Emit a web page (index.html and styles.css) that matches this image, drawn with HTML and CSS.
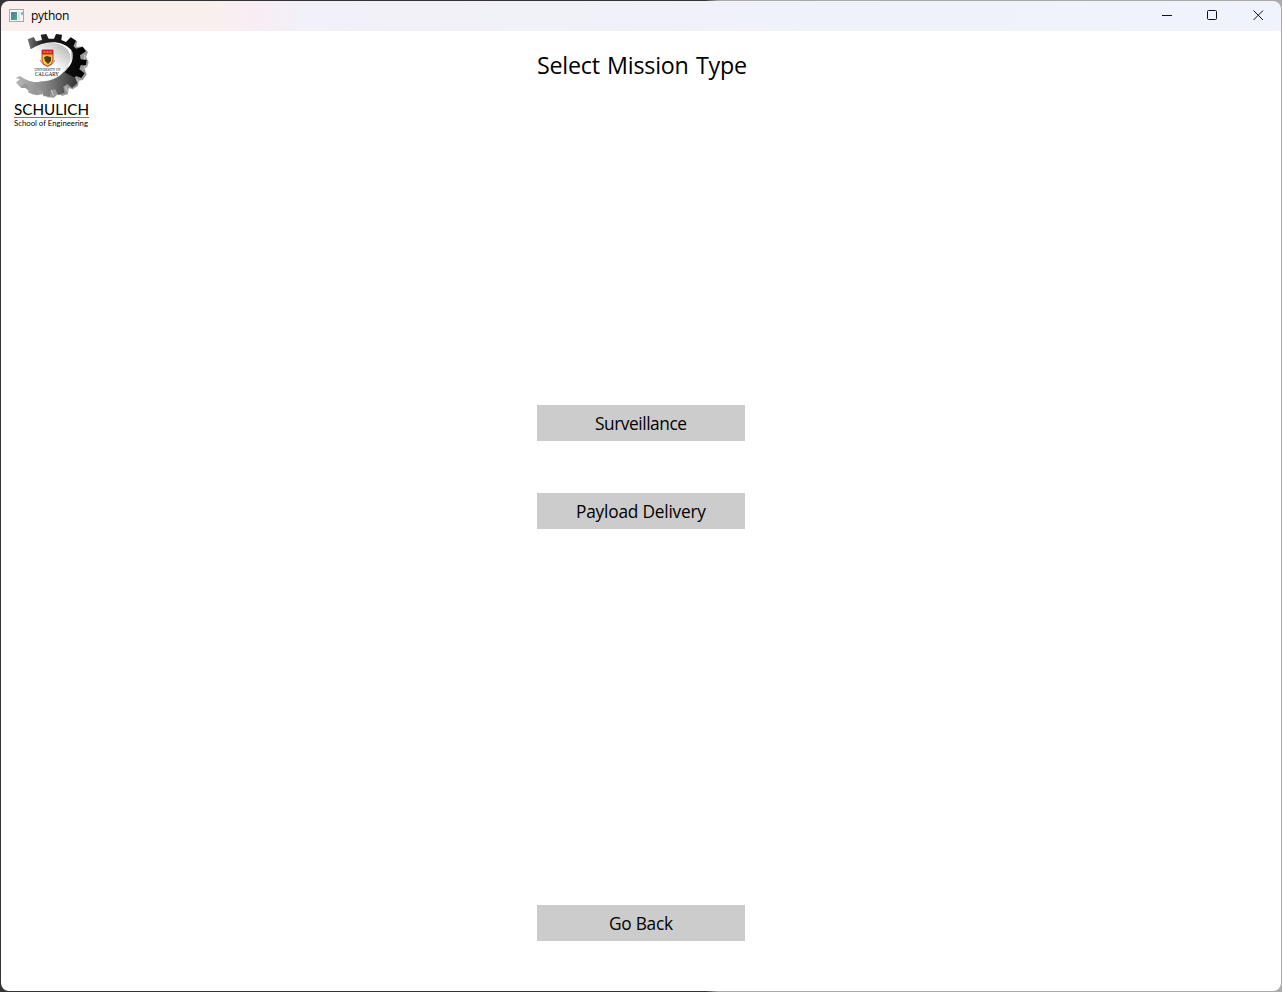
FILE: index.html
```html
<!DOCTYPE html>
<html lang="en">
<head>
<meta charset="utf-8">
<title>python</title>
<link rel="stylesheet" href="styles.css">
</head>
<body>
<div class="window">
  <header class="titlebar">
    <svg class="app-icon" width="16" height="13" viewBox="0 0 16 13">
      <defs><linearGradient id="pane" x2="1" y2="1"><stop stop-color="#4d7fae"/><stop offset="1" stop-color="#55a578"/></linearGradient></defs>
      <rect x=".5" y=".5" width="14" height="12" fill="#f5f5f5" stroke="#a3a9ae"/>
      <rect x="2" y="3" width="6" height="8" fill="url(#pane)"/>
      <rect x="9" y="3" width="2" height="8" fill="#dde2e5"/>
      <rect x="12" y="3" width="2" height="3" fill="#8fb9bf"/>
    </svg>
    <span class="caption">python</span>
    <svg class="controls" width="138" height="30" viewBox="0 0 138 30">
      <path d="M19 14.500h10" />
      <rect x="64.500" y="9.500" width="9" height="9" rx="1"/>
      <path d="M110.500 9.500l9.500 9.500M120 9.500l-9.500 9.500"/>
    </svg>
  </header>
  <main class="content">
    <svg class="logo" width="80" height="100" viewBox="12 32 80 100">
      <defs>
        <linearGradient id="arc" x1="0" x2="1"><stop stop-color="#777"/><stop offset=".25" stop-color="#222"/><stop offset="1" stop-color="#000"/></linearGradient>
        <linearGradient id="lower" x1="0" x2="1"><stop stop-color="#b8b8b8"/><stop offset=".5" stop-color="#858585"/><stop offset="1" stop-color="#333"/></linearGradient>
        <linearGradient id="disc" x1="0" y1="1" x2="1" y2="0"><stop offset=".5" stop-color="#fff"/><stop offset="1" stop-color="#aaa"/></linearGradient>
      </defs>
      <g transform="translate(12 32) scale(.33333)">
        <path fill="#999" d="M176 16L196 28 192 44 212 44 228 60 222 74 230 90 226 104 218 110 224 128 212 144 200 146 198 162 182 172 170 168 168 186 150 192 140 184 126 197 106 196 98 186 72 190 60 184 40 168 28 168 18 154 80 150 180 100z"/>
        <path fill="url(#arc)" d="M47 22l18-7 7 13 18-4-4-16 17-2 7 14 16 0 6-14 18 2-2 16 14 6 14-14 16 10-8 16 8 8 20-6 10 14-18 12 2 12 18 2-2 16-16 0-4 12 16 12-10 14-16-6-8 10-40-10c34-25 48-60 34-78C148 22 100 24 56 52z"/>
        <path fill="url(#lower)" d="M10 138L24 132C64 164 118 154 152 118L190 138 196 154 180 168 166 156 154 164 158 182 138 190 130 172 116 174 114 193 94 193 92 176 76 170 64 188 48 181 52 164 40 154 24 166 12 151 24 142z"/>
        <path fill="url(#disc)" d="M62 50C90 31 134 26 158 45 191 70 174 111 138 134 105 154 66 151 43 134z"/>
        <path d="M218 68v14M214 112l8-12M194 142l10 10M160 164l8 16M118 174l6 16" stroke="#ccc" stroke-width="3"/>
      </g>
      <path d="M42 50h11v9q0 5-5.500 7.500q-5.500-2.500-5.500-7.500z" fill="#f3cf20" stroke="#a81720" stroke-width=".8"/>
      <path d="M42 50h11v4.500H42z" fill="#ce1b28"/>
      <path d="M43.500 52h2m1 0h2m1 0h2" stroke="#f7d36a"/>
      <path d="M44 57l3-1 4 1 0 4-3 3-3-3z" fill="#54391b"/>
      <path d="M40.500 60q1 5 7 6 6-1 7-6" fill="none" stroke="#c44a40" stroke-width=".8"/>
      <text x="34.500" y="70.500" textLength="26" lengthAdjust="spacingAndGlyphs" class="university">UNIVERSITY OF</text>
      <text x="35" y="75.500" textLength="24" lengthAdjust="spacingAndGlyphs" class="calgary">CALGARY</text>
      <text x="14" y="115.300" textLength="75" lengthAdjust="spacingAndGlyphs" class="school-name">SCHULICH</text>
      <path d="M14 117.500h75" stroke="#ef4355"/>
      <text x="14" y="126" textLength="74" lengthAdjust="spacingAndGlyphs" class="school-sub">School of Engineering</text>
    </svg>
    <h1 class="heading"><svg width="212" height="36"><text x="1" y="26" textLength="210">Select Mission Type</text></svg></h1>
    <nav class="missions">
      <button class="action"><svg width="94" height="30"><text x="1" y="22" textLength="92">Surveillance</text></svg></button>
      <button class="action"><svg width="132" height="30"><text x="1" y="22" textLength="130">Payload Delivery</text></svg></button>
    </nav>
    <button class="action back"><svg width="66" height="30"><text x="1" y="22" textLength="64">Go Back</text></svg></button>
  </main>
</div>
</body>
</html>
```
FILE: styles.css
```css
* { box-sizing: border-box; }
body { margin: 0; height: 992px; overflow: hidden; background: linear-gradient(90deg, #343438 55%, #aaa 56%); font-family: "Open Sans", "Noto Sans", sans-serif; }
.window { width: 1282px; height: 992px; padding: 1px; }
.titlebar { height: 30px; display: flex; align-items: center; padding-left: 8px; border-radius: 8px 8px 0 0; background: linear-gradient(90deg, #f9f0ee 0, #f9f0ee 210px, #f9edf5 255px, #f2f0f8 300px, #f0f2f9 60%, #eff3fb 100%); }
.app-icon { flex: none; margin-bottom: 2px; }
.caption { margin-left: 6px; font: 12px/30px "Open Sans", sans-serif; letter-spacing: -.25px; color: #000; }
.controls { margin-left: auto; fill: none; stroke: #111; stroke-width: 1; }
.content { height: 960px; position: relative; display: grid; grid-template-rows: 374px 500px 1fr; justify-items: center; background: #fff; border-radius: 0 0 8px 8px; }
.logo { position: absolute; left: 11px; top: 1px; overflow: visible; }
.heading { margin: 17px 0 0 1px; height: 36px; font-size: 23.3px; font-weight: 400; word-spacing: 1.5px; }
.heading svg, .action svg { display: block; overflow: visible; }
.missions { display: flex; flex-direction: column; gap: 52px; }
.action { display: flex; align-items: center; justify-content: center; width: 208px; height: 36px; padding: 0; border: 0; background: #ccc; color: #000; font: 17.3px "Open Sans", "Noto Sans", sans-serif; }
.university { font: 4px "Liberation Serif", serif; }
.calgary { font: 6px "Liberation Serif", serif; }
.school-name { font: 14.5px Lato, sans-serif; }
.school-sub { font: 8px/1 Lato, sans-serif; }
```
